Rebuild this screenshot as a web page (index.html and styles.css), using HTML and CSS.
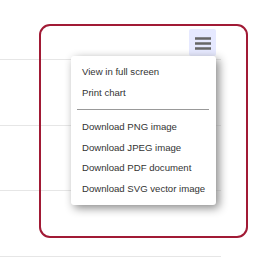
FILE: index.html
```html
<!DOCTYPE html>
<html>
<head>
<meta name="viewport" content="width=device-width, initial-scale=1">
<link rel="stylesheet" href="styles.css">
</head>
<body>
<div class="chart">
  <div class="grid">
    <div class="gridline"></div>
    <div class="gridline"></div>
    <div class="gridline"></div>
    <div class="gridline"></div>
  </div>

  <!-- focus outline round the export button area -->
  <div class="focus-ring"></div>

  <button class="menu-btn" title="Chart context menu">
    <svg width="16" height="14" viewBox="0 0 16 14">
      <path d="M0 2.5H16M0 7.5H16M0 12.5H16" stroke="#666" stroke-width="2.5" stroke-linecap="round"/>
    </svg>
  </button>

  <ul class="menu">
    <li class="menu-item">View in full screen</li>
    <li class="menu-item">Print chart</li>
    <li class="menu-sep"></li>
    <li class="menu-item">Download PNG image</li>
    <li class="menu-item">Download JPEG image</li>
    <li class="menu-item">Download PDF document</li>
    <li class="menu-item">Download SVG vector image</li>
  </ul>
</div>
</body>
</html>
```

FILE: styles.css
```css
body {
  margin: 0;
  background: #fff;
  font-family: "Liberation Sans", Arial, sans-serif;
}

.chart {
  position: relative;
  width: 275px;
  height: 268px;
  overflow: hidden;
}

/* Background grid of the plot */
.grid {
  padding-top: 59px;
  width: 221px;
}

.gridline {
  height: 64.5px;
  border-top: 1px solid #e6e6e6;
}

/* Focus outline */
.focus-ring {
  position: absolute;
  left: 39px;
  top: 24px;
  width: 205px;
  height: 210px;
  border: 2px solid #a11a35;
  border-radius: 11px;
}

/* Hamburger button */
.menu-btn {
  position: absolute;
  left: 189px;
  top: 29px;
  width: 27px;
  height: 27px;
  padding: 0;
  border: 0;
  border-radius: 2px;
  background: #e6e9ff;
  display: flex;
  align-items: center;
  justify-content: center;
}

/* The context menu */
.menu {
  position: absolute;
  left: 71px;
  top: 56px;
  margin: 0;
  padding: 6px 0;
  list-style: none;
  background: #fff;
  border-radius: 3px;
  box-shadow: 3px 3px 10px #888;
}

.menu-item {
  padding: 4px 11px;
  font-size: 9.6px;
  line-height: 12.5px;
  color: #333;
  white-space: nowrap;
}

.menu-sep {
  margin: 6px 7px 7px 6px;
  border-top: 1px solid #999;
}
```
